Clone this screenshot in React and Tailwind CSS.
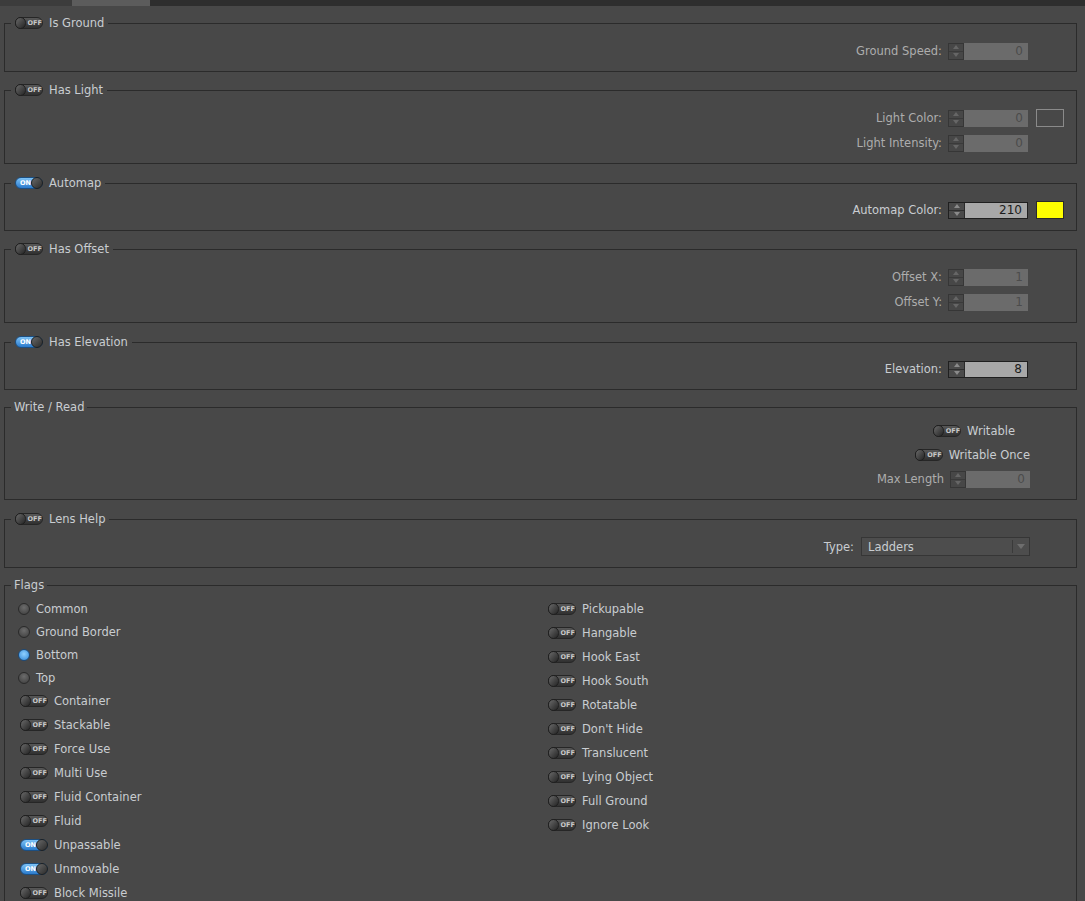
import React from 'react';

const FONT = { fontFamily: '"DejaVu Sans", Verdana, sans-serif' };

const Toggle = ({ on }) =>
  on ? (
    <div className="flex h-[12px] w-[28px] shrink-0 items-center rounded-full border border-[#1c4f82] bg-gradient-to-b from-[#7cc2f6] to-[#2a7bcc]">
      <span className="flex-1 pl-[4px] text-[6.5px] font-bold leading-none text-white">ON</span>
      <span className="-mr-[1px] h-[12px] w-[12px] rounded-full border border-[#1f1f1f] bg-gradient-to-br from-[#6a6a6a] to-[#2c2c2c]" />
    </div>
  ) : (
    <div className="flex h-[12px] w-[28px] shrink-0 items-center rounded-full border border-[#262626] bg-gradient-to-b from-[#585858] to-[#303030]">
      <span className="-ml-[1px] h-[12px] w-[12px] rounded-full border border-[#1f1f1f] bg-gradient-to-br from-[#6a6a6a] to-[#262626]" />
      <span className="flex-1 pl-[2px] text-[6.5px] font-bold leading-none text-[#c8c8c8]">OFF</span>
    </div>
  );

const Radio = ({ on }) =>
  on ? (
    <span className="h-[12px] w-[12px] shrink-0 rounded-full border border-[#1d4a78] bg-[radial-gradient(circle_at_50%_40%,#8fd0ff,#2f86d8)]" />
  ) : (
    <span className="h-[12px] w-[12px] shrink-0 rounded-full border border-[#2a2a2a] bg-[radial-gradient(circle_at_50%_35%,#6c6c6c,#3c3c3c)]" />
  );

const Spin = ({ value, enabled }) => (
  <div className={`flex h-[17px] w-[80px] ${enabled ? 'border border-[#1f1f1f]' : ''}`}>
    <div
      className={`flex w-[16px] flex-col border ${
        enabled ? 'border-[#2a2a2a] border-y-0 border-l-0 bg-[#4a4a4a]' : 'border-[#363636] bg-[#474747]'
      }`}
    >
      <div className={`flex flex-1 items-center justify-center border-b ${enabled ? 'border-[#2e2e2e]' : 'border-[#3a3a3a]'}`}>
        <svg width="6" height="4" viewBox="0 0 6 4">
          <path d="M0 4 L3 0 L6 4 Z" fill={enabled ? '#8a8a8a' : '#666'} />
        </svg>
      </div>
      <div className="flex flex-1 items-center justify-center">
        <svg width="6" height="4" viewBox="0 0 6 4">
          <path d="M0 0 L3 4 L6 0 Z" fill={enabled ? '#8a8a8a' : '#666'} />
        </svg>
      </div>
    </div>
    <div
      className={`flex flex-1 items-center justify-end pr-[5px] text-[12px] ${
        enabled ? 'bg-[#a8a8a8] text-[#1c1c1c]' : 'bg-[#6b6b6b] text-[#4c4c4c]'
      }`}
    >
      {value}
    </div>
  </div>
);

const Group = ({ title, toggle, children, className = '' }) => (
  <fieldset className={`ml-[4px] mr-[8px] border border-[#2b2b2b] ${className}`}>
    <legend
      className={`flex h-[14px] items-center gap-[6px] text-[11.5px] leading-[14px] text-[#c9cdd1] ${
        toggle === undefined ? 'ml-[6px] px-[3px]' : 'ml-[6px] px-[4px]'
      }`}
    >
      {toggle !== undefined && <Toggle on={toggle} />}
      <span>{title}</span>
    </legend>
    {children}
  </fieldset>
);

const FieldRow = ({ label, value, enabled, swatch }) => (
  <div className="flex h-[18px] items-center justify-end">
    <span className={`mr-[6px] text-[11.5px] ${enabled ? 'text-[#c9cdd1]' : 'text-[#adadad]'}`}>{label}</span>
    <Spin value={value} enabled={enabled} />
    <div className="ml-[8px] w-[28px]">
      {swatch === 'grey' && <div className="h-[18px] w-[28px] border border-[#8a8a8a] bg-[#484848]" />}
      {swatch === 'yellow' && <div className="h-[18px] w-[28px] border border-[#2a2a2a] bg-[#ffff00]" />}
    </div>
  </div>
);

const Fields = ({ children, pt = 'pt-[12px]' }) => (
  <div className={`flex flex-col gap-[7px] pb-[11px] pr-[12px] ${pt}`}>{children}</div>
);

const ToggleItem = ({ on, label }) => (
  <div className="flex h-[24px] items-center gap-[6px]">
    <Toggle on={on} />
    <span className="text-[11.5px] text-[#c9cdd1]">{label}</span>
  </div>
);

const RadioItem = ({ on, label }) => (
  <div className="flex h-[23px] items-center gap-[6px]">
    <Radio on={on} />
    <span className="text-[11.5px] text-[#c9cdd1]">{label}</span>
  </div>
);

const leftToggles = [
  ['Container', false],
  ['Stackable', false],
  ['Force Use', false],
  ['Multi Use', false],
  ['Fluid Container', false],
  ['Fluid', false],
  ['Unpassable', true],
  ['Unmovable', true],
  ['Block Missile', false],
];

const rightToggles = [
  'Pickupable',
  'Hangable',
  'Hook East',
  'Hook South',
  'Rotatable',
  "Don't Hide",
  'Translucent',
  'Lying Object',
  'Full Ground',
  'Ignore Look',
];

export default function App() {
  return (
    <div className="h-[901px] w-[1085px] overflow-hidden bg-[#484848] leading-[14px]" style={FONT}>
      <div className="flex h-[6px]">
        <div className="w-[72px] bg-[#3c3c3c]" />
        <div className="w-[78px] bg-[#5c5c5c]" />
        <div className="flex-1 bg-[#2e2e2e]" />
      </div>

      <div className="flex flex-col pt-[10px]">
        <Group title="Is Ground" toggle={false}>
          <Fields>
            <FieldRow label="Ground Speed:" value="0" />
          </Fields>
        </Group>

        <Group title="Has Light" toggle={false} className="mt-[11px]">
          <Fields>
            <FieldRow label="Light Color:" value="0" swatch="grey" />
            <FieldRow label="Light Intensity:" value="0" />
          </Fields>
        </Group>

        <Group title="Automap" toggle={true} className="mt-[12px]">
          <Fields pt="pt-[11px]">
            <FieldRow label="Automap Color:" value="210" enabled swatch="yellow" />
          </Fields>
        </Group>

        <Group title="Has Offset" toggle={false} className="mt-[11px]">
          <Fields>
            <FieldRow label="Offset X:" value="1" />
            <FieldRow label="Offset Y:" value="1" />
          </Fields>
        </Group>

        <Group title="Has Elevation" toggle={true} className="mt-[12px]">
          <Fields pt="pt-[11px]">
            <FieldRow label="Elevation:" value="8" enabled />
          </Fields>
        </Group>

        <Group title="Write / Read" className="mt-[10px]">
          <div className="flex flex-col gap-[6px] pb-[11px] pr-[47px] pt-[8px]">
            <div className="mr-[14px] flex h-[18px] items-center justify-end gap-[6px]">
              <Toggle on={false} />
              <span className="text-[11.5px] text-[#c9cdd1]">Writable</span>
            </div>
            <div className="-mr-[1px] flex h-[18px] items-center justify-end gap-[6px]">
              <Toggle on={false} />
              <span className="text-[11.5px] text-[#c9cdd1]">Writable Once</span>
            </div>
            <div className="-mr-[1px] flex h-[18px] items-center justify-end">
              <span className="mr-[6px] text-[11.5px] text-[#adadad]">Max Length</span>
              <Spin value="0" />
            </div>
          </div>
        </Group>

        <Group title="Lens Help" toggle={false} className="mt-[12px]">
          <div className="flex items-center justify-end pb-[11px] pr-[47px] pt-[11px]">
            <span className="mr-[7px] text-[11.5px] text-[#c9cdd1]">Type:</span>
            <div className="-mr-[1px] flex h-[19px] w-[169px] items-center border border-[#363636] bg-[#4d4d4d]">
              <span className="flex-1 pl-[6px] text-[11.5px] text-[#c9cdd1]">Ladders</span>
              <div className="flex h-[13px] w-[17px] items-center justify-center border-l border-[#3a3a3a]">
                <svg width="8" height="5" viewBox="0 0 8 5">
                  <path d="M0 0 L4 5 L8 0 Z" fill="#6e6e6e" />
                </svg>
              </div>
            </div>
          </div>
        </Group>

        <Group title="Flags" className="mt-[10px] pb-[20px]">
          <div className="grid grid-cols-[530px_1fr] pl-[13px] pt-[5px]">
            <div className="flex flex-col">
              <RadioItem label="Common" />
              <RadioItem label="Ground Border" />
              <RadioItem label="Bottom" on />
              <RadioItem label="Top" />
              <div className="flex flex-col pl-[2px]">
                {leftToggles.map(([label, on]) => (
                  <ToggleItem key={label} label={label} on={on} />
                ))}
              </div>
            </div>
            <div className="flex flex-col">
              {rightToggles.map((label) => (
                <ToggleItem key={label} label={label} on={false} />
              ))}
            </div>
          </div>
        </Group>
      </div>
    </div>
  );
}
